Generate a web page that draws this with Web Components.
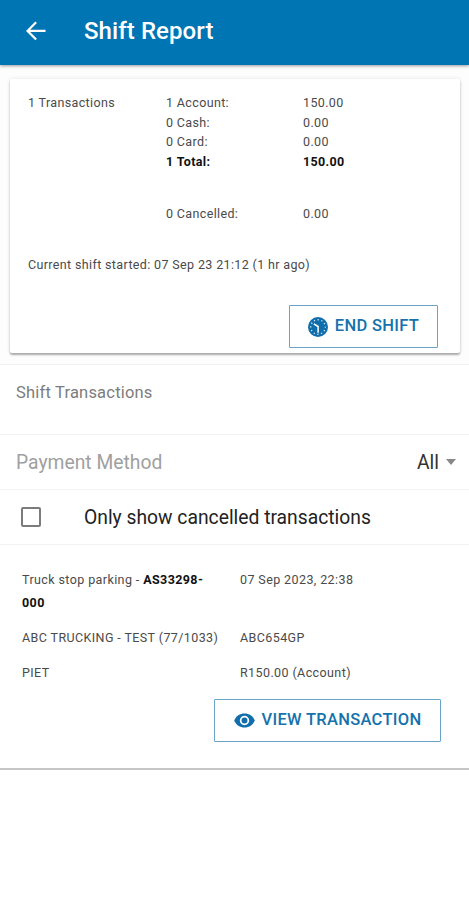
<!DOCTYPE html>
<html lang="en">
<head>
<meta charset="utf-8">
<title>Shift Report</title>
<style>
  body {
    margin: 0;
    background: #fff;
    color: #4a4a4a;
    font-family: Roboto, "Liberation Sans", sans-serif;
  }
</style>
</head>
<body>
<shift-page></shift-page>

<script>
const define = (name, html) => {
  const template = document.createElement('template');
  template.innerHTML = html;
  customElements.define(name, class extends HTMLElement {
    constructor() {
      super();
      this.attachShadow({ mode: 'open' });
      this.shadowRoot.appendChild(template.content.cloneNode(true));
    }
  });
};

define('app-bar', `
  <style>
    :host {
      display: flex;
      align-items: center;
      box-sizing: border-box;
      height: 65px;
      padding: 0 0 3px 24px;
      background: #0075b3;
      color: #fff;
      box-shadow: 0 1px 3px rgba(0, 0, 0, .4);
      position: relative;
    }
    svg { width: 24px; height: 24px; margin-right: 36px; fill: currentColor; }
    h1 { margin: 0; font-size: 24px; font-weight: 500; line-height: 30px; letter-spacing: .08px; }
  </style>
  <svg viewBox="0 0 24 24"><path d="M21.500 10.800H6.200l6.700-6.700L11.300 2.500 2 11.900l9.300 9.400 1.600-1.600-6.700-6.700h15.300z"/></svg>
  <h1><slot></slot></h1>
`);

define('outline-button', `
  <style>
    :host {
      display: inline-flex;
      align-items: center;
      justify-content: center;
      box-sizing: border-box;
      height: 43px;
      border: 1px solid #6ba2c8;
      border-radius: 1px;
      color: #1672ad;
      font-size: 16.5px;
      font-weight: 500;
      letter-spacing: .3px;
      line-height: 20px;
      white-space: nowrap;
    }
    span { padding-bottom: 1px; }
    ::slotted(svg) { flex: none; margin-right: 7px; }
  </style>
  <slot name="icon"></slot><span><slot></slot></span>
`);

define('total-row', `
  <style>
    :host { display: grid; grid-template-columns: 138px 137px 1fr; height: 19.7px; line-height: 19.7px; }
  </style>
  <span><slot name="lead"></slot></span>
  <span><slot name="label"></slot></span>
  <span><slot></slot></span>
`);

define('summary-card', `
  <style>
    :host {
      display: flex;
      flex-direction: column;
      box-sizing: border-box;
      height: 274px;
      margin: 14px 9px 0 10px;
      padding: 14px 22px 5px 18px;
      background: #fff;
      border-radius: 2px;
      box-shadow: 0 2px 2px rgba(0, 0, 0, .3), 0 0 4px rgba(0, 0, 0, .1);
      font-size: 12.5px;
      letter-spacing: .36px;
    }
    .started { margin-top: 32px; line-height: 20px; }
    .actions { display: flex; justify-content: flex-end; margin-top: auto; }
  </style>
  <slot></slot>
  <div class="started"><slot name="started"></slot></div>
  <div class="actions"><slot name="action"></slot></div>
`);

define('list-row', `
  <style>
    :host {
      display: flex;
      align-items: center;
      box-sizing: border-box;
      height: 55px;
      padding: 0 13px 0 16px;
      border-bottom: 1px solid #f2f2f2;
      font-size: 19.3px;
    }
    .end { display: flex; align-items: center; margin-left: auto; color: #333; }
  </style>
  <slot></slot>
  <div class="end"><slot name="end"></slot></div>
`);

define('check-box', `
  <style>
    :host { display: flex; align-items: center; color: #222; font-size: 19.3px; }
    i { box-sizing: border-box; width: 20px; height: 20px; margin: 0 43px 0 5px; border: 2px solid #7c7c7c; border-radius: 2px; }
  </style>
  <i></i><span><slot></slot></span>
`);

define('transaction-item', `
  <style>
    :host {
      display: block;
      box-sizing: border-box;
      height: 225px;
      padding: 23px 28px 0 22px;
      border-bottom: 2px solid #c6c6c6;
      font-size: 12.5px;
      letter-spacing: .4px;
    }
    .details { display: grid; grid-template-columns: 200px 1fr; column-gap: 18px; row-gap: 12px; line-height: 23px; }
    .actions { display: flex; justify-content: flex-end; margin-top: 15px; }
  </style>
  <div class="details"><slot></slot></div>
  <div class="actions"><slot name="action"></slot></div>
`);

define('shift-page', `
  <style>
    :host { display: block; height: 900px; overflow: hidden; background: #fff; }
    .top { display: flow-root; height: 299px; background: #fdfdfd; border-bottom: 1px solid #f0f0f0; }
    .gap { height: 32px; }
    .heading { height: 70px; padding-bottom: 14px; font-size: 16.5px; color: #7c7c7c; letter-spacing: .2px; }
    .muted { color: #a0a0a0; }
    b { color: #111; font-weight: 700; }
    .caret { width: 0; border: 5.5px solid transparent; border-top: 6px solid #888; border-bottom: 0; margin-left: 7px; }
    .end { width: 149px; }
    .view { width: 227px; }
  </style>
  <app-bar>Shift Report</app-bar>
  <div class="top">
    <summary-card>
      <total-row><span slot="lead">1 Transactions</span><span slot="label">1 Account:</span>150.00</total-row>
      <total-row><span slot="label">0 Cash:</span>0.00</total-row>
      <total-row><span slot="label">0 Card:</span>0.00</total-row>
      <total-row><b slot="label">1 Total:</b><b>150.00</b></total-row>
      <div class="gap"></div>
      <total-row><span slot="label">0 Cancelled:</span>0.00</total-row>
      <span slot="started">Current shift started: 07 Sep 23 21:12 (1 hr ago)</span>
      <outline-button class="end" slot="action">
        <svg slot="icon" width="20" height="20" viewBox="0 0 20 20">
          <circle cx="10" cy="10" r="10" fill="#0f6eab"/>
          <circle cx="10" cy="10" r="7.300" fill="none" stroke="#d6e6f1" stroke-width="1.400" stroke-dasharray="1.200 2.622" stroke-dashoffset=".6"/>
          <path d="M5.800 6.800l4.300 2.700v6.200" fill="none" stroke="#fff" stroke-width="1.500"/>
        </svg>END SHIFT</outline-button>
    </summary-card>
  </div>
  <list-row class="heading">Shift Transactions</list-row>
  <list-row><span class="muted">Payment Method</span><span slot="end">All</span><i slot="end" class="caret"></i></list-row>
  <list-row><check-box>Only show cancelled transactions</check-box></list-row>
  <transaction-item>
    <span>Truck stop parking - <b>AS33298-<br>000</b></span><span>07 Sep 2023, 22:38</span>
    <span>ABC TRUCKING - TEST (77/1033)</span><span>ABC654GP</span>
    <span>PIET</span><span>R150.00 (Account)</span>
    <outline-button class="view" slot="action">
      <svg slot="icon" width="21" height="15" viewBox="0 0 22 16">
        <path d="M0 8C2 3.300 6 .5 11 .5S20 3.300 22 8c-2 4.700-6 7.500-11 7.500S2 12.700 0 8z" fill="#0f6eab"/>
        <circle cx="11" cy="8" r="4.100" fill="none" stroke="#fff" stroke-width="1.900"/>
      </svg>VIEW TRANSACTION</outline-button>
  </transaction-item>
`);
</script>
</body>
</html>
